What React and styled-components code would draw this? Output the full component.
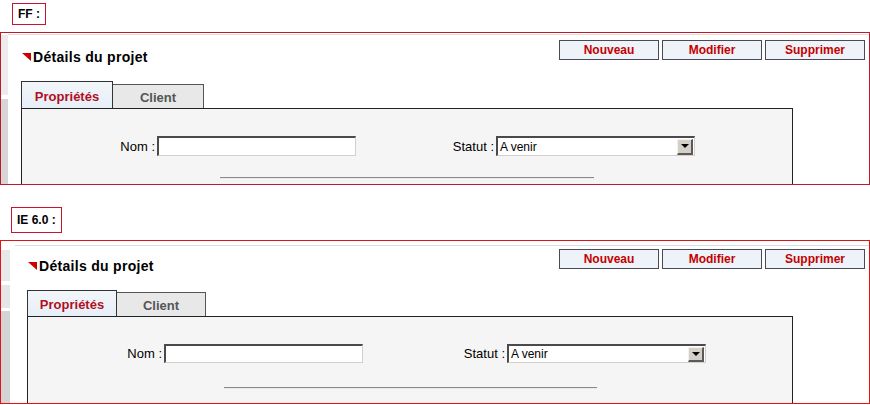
import React from 'react';
import styled, { createGlobalStyle, css } from 'styled-components';

const GlobalStyle = createGlobalStyle`
  html, body {
    margin: 0;
    padding: 0;
    background: #fff;
  }
  body {
    font-family: "Liberation Sans", Arial, sans-serif;
    font-size: 12px;
    color: #000;
  }
`;

// per-browser metrics, the two captures are not pixel identical
const metrics = {
  ff: {
    caption: { margin: '3px 0 7px 12px', lineHeight: 20 },
    frameHeight: 153,
    frameColor: '#bd1a2c',
    strip: 7,
    stripBg: `linear-gradient(to bottom,
      #fff 0, #fff 2px, #ececec 2px, #ececec 62px, #fff 62px, #fff 66px,
      #d6d6d6 66px, #d6d6d6 100%)`,
    innerGap: 0,
    innerTop: 1,
    innerLine: '#e4dcd4',
    padTop: 5,
    padLeft: 13,
    tabHeights: [27, 24],
    tabWidths: [92, 91],
    panelWidth: 772,
    cols: '135px 199px 140px 199px',
    fieldHeight: 20,
    ruleGap: 21,
    ruleWidth: 374,
  },
  ie: {
    caption: { margin: '22px 0 7px 11px', lineHeight: 24 },
    frameHeight: 164,
    frameColor: '#e01414',
    strip: 9,
    stripBg: `linear-gradient(to bottom,
      #fff 0, #fff 9px, #e8e8e8 9px, #e8e8e8 40px, #fff 40px, #fff 44px,
      #e6e6e6 44px, #e6e6e6 67px, #fff 67px, #fff 70px,
      #d4d4d4 70px, #d4d4d4 100%)`,
    innerGap: 5,
    innerTop: 4,
    innerLine: '#d6dce4',
    padTop: 3,
    padLeft: 12,
    tabHeights: [26, 24],
    tabWidths: [90, 89],
    panelWidth: 766,
    cols: '136px 199px 144px 199px',
    fieldHeight: 19,
    ruleGap: 24,
    ruleWidth: 373,
  },
};

const Page = styled.div`
  width: 870px;
  height: 405px;
  overflow: hidden;
  display: flex;
  flex-direction: column;
`;

const Caption = styled.div`
  align-self: flex-start;
  margin: ${p => p.$m.caption.margin};
  padding: 0 5px;
  line-height: ${p => p.$m.caption.lineHeight}px;
  border: 1px solid #c8142c;
  font-weight: bold;
  font-size: 12px;
`;

const Frame = styled.div`
  box-sizing: border-box;
  display: flex;
  height: ${p => p.$m.frameHeight}px;
  border: 1px solid ${p => p.$m.frameColor};
  overflow: hidden;
  flex-shrink: 0;
`;

const Strip = styled.div`
  width: ${p => p.$m.strip}px;
  flex-shrink: 0;
  background: ${p => p.$m.stripBg};
`;

const Inner = styled.div`
  flex: 1;
  display: flex;
  flex-direction: column;
  margin: ${p => p.$m.innerTop}px 0 0 ${p => p.$m.innerGap}px;
  border-top: 1px solid ${p => p.$m.innerLine};
  padding: ${p => p.$m.padTop}px 4px 0 ${p => p.$m.padLeft}px;
  min-width: 0;
`;

const Header = styled.div`
  display: flex;
  justify-content: space-between;
  align-items: flex-start;
`;

const Title = styled.h2`
  margin: 0;
  padding-top: 9px;
  display: flex;
  align-items: center;
  font-size: 14px;
  line-height: 17px;
  letter-spacing: 0.3px;
  font-weight: bold;
`;

const Triangle = styled.span`
  width: 0;
  height: 0;
  margin: 0 2px 1px 1px;
  border-top: 8px solid #cc0000;
  border-left: 9px solid transparent;
`;

const Buttons = styled.div`
  display: flex;
  gap: 3px;
`;

const ActionButton = styled.button`
  box-sizing: border-box;
  width: 100px;
  height: 20px;
  padding: 0;
  border: 1px solid #4a4a55;
  background: #edf3f9;
  color: #c40000;
  font-family: "Liberation Sans", Arial, sans-serif;
  font-weight: bold;
  font-size: 12px;
  cursor: pointer;
`;

const Tabs = styled.div`
  display: flex;
  align-items: flex-end;
  margin-top: 15px;
`;

const Tab = styled.div`
  box-sizing: border-box;
  display: flex;
  align-items: center;
  justify-content: center;
  padding-top: 2px;
  font-weight: bold;
  font-size: 13px;
  border: 1px solid #333;
  border-bottom: none;
  ${p => p.$active
    ? css`
        width: ${p.$m.tabWidths[0]}px;
        height: ${p.$m.tabHeights[0]}px;
        background: linear-gradient(to bottom, #f2f6fa, #e6eef7);
        color: #b0101e;
      `
    : css`
        width: ${p.$m.tabWidths[1]}px;
        height: ${p.$m.tabHeights[1]}px;
        border-left: none;
        border-color: #555;
        background: #e8e8e8;
        color: #555;
      `}
`;

const Panel = styled.div`
  box-sizing: border-box;
  width: ${p => p.$m.panelWidth}px;
  flex: 1;
  border: 1px solid #222;
  border-bottom: none;
  background: #f5f5f5;
  padding-top: 27px;
`;

const FormRow = styled.div`
  display: grid;
  grid-template-columns: ${p => p.$m.cols};
  align-items: center;
  height: ${p => p.$m.fieldHeight}px;
`;

const Label = styled.label`
  text-align: right;
  padding-right: 2px;
  font-size: 13px;
`;

const TextInput = styled.input`
  box-sizing: border-box;
  width: 199px;
  height: ${p => p.$m.fieldHeight}px;
  margin: 0;
  padding: 0 2px;
  border-style: solid;
  border-width: 2px 1px 1px 2px;
  border-color: #4a4a4a #d4d0c8 #d4d0c8 #4a4a4a;
  background: #fff;
  font: 12px "Liberation Sans", Arial, sans-serif;
`;

const SelectBox = styled.div`
  box-sizing: border-box;
  display: flex;
  align-items: center;
  width: 199px;
  height: ${p => p.$m.fieldHeight}px;
  border-style: solid;
  border-width: 2px 1px 1px 2px;
  border-color: #4a4a4a #d4d0c8 #d4d0c8 #4a4a4a;
  background: #fff;
  padding-right: 1px;
`;

const SelectValue = styled.span`
  flex: 1;
  padding-left: 2px;
  font-size: 12px;
`;

const SelectArrow = styled.span`
  box-sizing: border-box;
  display: flex;
  align-items: center;
  justify-content: center;
  width: 16px;
  height: ${p => p.$m.fieldHeight - 4}px;
  background: #d4d0c8;
  border-style: solid;
  border-width: 1px 2px 2px 1px;
  border-color: #f4f2ee #5a5a5a #5a5a5a #f4f2ee;

  &::after {
    content: '';
    width: 0;
    height: 0;
    border-left: 4px solid transparent;
    border-right: 4px solid transparent;
    border-top: 4px solid #000;
  }
`;

const Rule = styled.div`
  width: ${p => p.$m.ruleWidth}px;
  margin: ${p => p.$m.ruleGap}px auto 0;
  border-top: 1px solid #8a8a8a;
  border-bottom: 1px solid #eaeaea;
`;

function ProjectFrame({ browser }) {
  const m = metrics[browser];
  return (
    <Frame $m={m}>
      <Strip $m={m} />
      <Inner $m={m}>
        <Header>
          <Title>
            <Triangle />
            Détails du projet
          </Title>
          <Buttons>
            <ActionButton>Nouveau</ActionButton>
            <ActionButton>Modifier</ActionButton>
            <ActionButton>Supprimer</ActionButton>
          </Buttons>
        </Header>

        <Tabs>
          <Tab $m={m} $active>Propriétés</Tab>
          <Tab $m={m}>Client</Tab>
        </Tabs>

        <Panel $m={m}>
          <FormRow $m={m}>
            <Label htmlFor={`nom-${browser}`}>Nom :</Label>
            <TextInput id={`nom-${browser}`} $m={m} />
            <Label>Statut :</Label>
            <SelectBox $m={m}>
              <SelectValue>A venir</SelectValue>
              <SelectArrow $m={m} />
            </SelectBox>
          </FormRow>
          <Rule $m={m} />
        </Panel>
      </Inner>
    </Frame>
  );
}

export default function App() {
  return (
    <Page>
      <GlobalStyle />
      <Caption $m={metrics.ff}>FF :</Caption>
      <ProjectFrame browser="ff" />
      <Caption $m={metrics.ie}>IE 6.0 :</Caption>
      <ProjectFrame browser="ie" />
    </Page>
  );
}
